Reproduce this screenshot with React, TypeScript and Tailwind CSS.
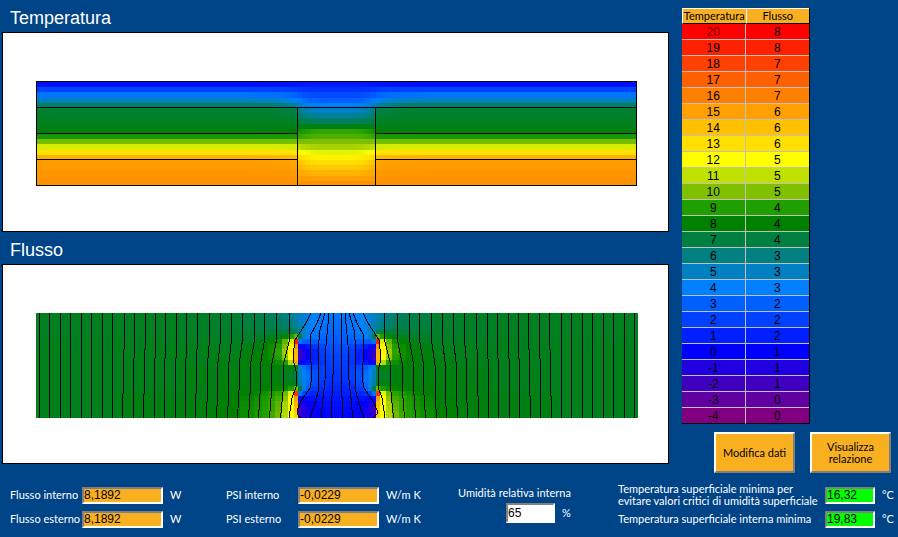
import React from "react";

const LEGEND = [
  { temp: 20, flux: 8, rgb: [255, 0, 0], bg: "bg-[#ff0000] text-[#780000]" },
  { temp: 19, flux: 8, rgb: [255, 32, 0], bg: "bg-[#ff2000]" },
  { temp: 18, flux: 7, rgb: [255, 64, 0], bg: "bg-[#ff4000]" },
  { temp: 17, flux: 7, rgb: [255, 96, 0], bg: "bg-[#ff6000]" },
  { temp: 16, flux: 7, rgb: [255, 128, 0], bg: "bg-[#ff8000]" },
  { temp: 15, flux: 6, rgb: [255, 160, 0], bg: "bg-[#ffa000]" },
  { temp: 14, flux: 6, rgb: [255, 192, 0], bg: "bg-[#ffc000]" },
  { temp: 13, flux: 6, rgb: [255, 224, 0], bg: "bg-[#ffe000]" },
  { temp: 12, flux: 5, rgb: [255, 255, 0], bg: "bg-[#ffff00]" },
  { temp: 11, flux: 5, rgb: [192, 224, 0], bg: "bg-[#c0e000]" },
  { temp: 10, flux: 5, rgb: [128, 192, 0], bg: "bg-[#80c000]" },
  { temp: 9, flux: 4, rgb: [32, 160, 0], bg: "bg-[#20a000]" },
  { temp: 8, flux: 4, rgb: [0, 128, 0], bg: "bg-[#008000]" },
  { temp: 7, flux: 4, rgb: [0, 128, 64], bg: "bg-[#008040]" },
  { temp: 6, flux: 3, rgb: [0, 128, 128], bg: "bg-[#008080]" },
  { temp: 5, flux: 3, rgb: [0, 128, 192], bg: "bg-[#0080c0]" },
  { temp: 4, flux: 3, rgb: [0, 128, 255], bg: "bg-[#0080ff]" },
  { temp: 3, flux: 2, rgb: [0, 96, 255], bg: "bg-[#0060ff]" },
  { temp: 2, flux: 2, rgb: [0, 64, 255], bg: "bg-[#0040ff]" },
  { temp: 1, flux: 2, rgb: [0, 32, 255], bg: "bg-[#0020ff]" },
  { temp: 0, flux: 1, rgb: [0, 0, 255], bg: "bg-[#0000ff]" },
  { temp: -1, flux: 1, rgb: [32, 0, 224], bg: "bg-[#2000e0]" },
  { temp: -2, flux: 1, rgb: [64, 0, 192], bg: "bg-[#4000c0]" },
  { temp: -3, flux: 0, rgb: [96, 0, 160], bg: "bg-[#6000a0]" },
  { temp: -4, flux: 0, rgb: [128, 0, 128], bg: "bg-[#800080]" },
];

// colour of a value on the -4..20 scale, blended between two legend steps
function colorAt(value: number) {
  const pos = Math.min(Math.max(20 - value, 0), 24);
  const i = Math.min(Math.floor(pos), 23);
  const f = pos - i;
  const a = LEGEND[i].rgb;
  const b = LEGEND[i + 1].rgb;
  const mix = a.map((c, k) => Math.round(c + (b[k] - c) * f));
  return `rgb(${mix.join(",")})`;
}

const ROWS = Array.from({ length: 20 }, (_, i) => i);
const rowY = (top: number, i: number) => Math.round(top + i * 5.2);

// temperature per row: far from the pillar, and on its axis
const WALL = [
  0.5, 2.1, 3.6, 5.1, 6.4, 7.2, 7.35, 7.5, 7.65, 7.8, 8.7, 9.9, 11.4, 13, 14.4,
  15.1, 15.2, 15.3, 15.4, 15.5,
];
const AXIS = [
  0.8, 1.5, 2.3, 3, 4.1, 4.9, 5.6, 6.5, 7.7, 9.2, 9.5, 10, 10.6, 11.6, 12.4, 13,
  13.7, 14.4, 15, 15.5,
];

function weight(d: number, row: number) {
  if (d < 39) return 1 - 0.5 * Math.pow(d / 39, 4);
  const near = row < 5 ? 0.5 : 0.15;
  return near * Math.exp(-(d - 39) / 14);
}

const TEMP_X = [33, 93, 153, 193, 213, 225, 237, 245, 253, 258, 262, 266, 270, 274, 278, 282, 286, 290, 294, 299, 303, 307, 311, 315, 319, 323, 327, 333.5];

// flux field, left half. Columns are the gaps between FLUX_X
const FLUX_X = [33, 117, 177, 212, 237, 251, 259, 265, 272, 279, 285, 291, 295, 299, 303, 307, 315, 323, 334];
const FLUX = [
  [7.5, 7.5, 7.4, 7.3, 7, 6.9, 6.8, 6.6, 6.4, 6.1, 5.7, 5.3, 5, 4.7, 4.4, 4.1, 3.8, 3.6],
  [7.5, 7.5, 7.4, 7.3, 7, 6.9, 6.8, 6.7, 6.5, 6.2, 5.8, 5.4, 5, 4.7, 4.4, 4.1, 3.7, 3.5],
  [7.5, 7.5, 7.4, 7.3, 7.1, 7, 6.9, 6.8, 6.7, 6.4, 6.1, 5.7, 5.2, 4.8, 4.4, 4, 3.6, 3.4],
  [7.5, 7.5, 7.4, 7.3, 7.2, 7.1, 7.1, 7.1, 7.1, 7, 7, 6.4, 5.6, 4.9, 4.3, 3.8, 3.5, 3.2],
  [7.5, 7.5, 7.5, 7.4, 7.3, 7.3, 7.4, 7.5, 7.7, 8.2, 8.9, 9.7, 7, 5, 4.2, 3.6, 3.3, 3],
  [7.6, 7.6, 7.5, 7.5, 7.5, 7.6, 7.8, 8.1, 8.5, 9.7, 11.4, 19.2, 3.5, 3, 2.9, 2.9, 2.9, 2.8],
  [7.6, 7.6, 7.6, 7.6, 7.7, 7.8, 8, 8.4, 9, 10, 12.2, 15.5, 0.2, 0.3, 0.8, 1.6, 2.2, 2.5],
  [7.6, 7.6, 7.6, 7.6, 7.8, 7.9, 8.1, 8.5, 9.1, 10.4, 12.4, 14.4, -1.6, -0.8, 0, 1, 1.9, 2.3],
  [7.6, 7.6, 7.6, 7.7, 7.8, 7.9, 8.1, 8.4, 9, 10.2, 12, 14.2, -2, -0.9, 0, 0.9, 1.7, 2.1],
  [7.6, 7.6, 7.6, 7.7, 7.8, 7.9, 8, 8.1, 8.4, 9, 10.8, 14.8, 0, 0.2, 0.6, 1.2, 1.6, 1.9],
  [7.6, 7.6, 7.7, 7.7, 7.8, 7.8, 7.9, 7.9, 7.8, 7.8, 7.8, 8.1, 4.8, 3.6, 2.8, 2.2, 1.9, 1.8],
  [7.6, 7.6, 7.7, 7.7, 7.8, 7.8, 7.8, 7.8, 7.8, 7.6, 7.4, 7, 5.1, 4.2, 3.4, 2.5, 2, 1.7],
  [7.6, 7.6, 7.7, 7.8, 7.8, 7.8, 7.8, 7.8, 7.8, 7.6, 7.4, 7, 5.2, 4.3, 3.6, 2.5, 1.9, 1.6],
  [7.6, 7.6, 7.7, 7.8, 7.9, 7.9, 7.9, 7.9, 7.9, 7.8, 7.8, 7.7, 5.4, 4.4, 3.4, 2.3, 1.7, 1.4],
  [7.6, 7.6, 7.7, 7.8, 7.9, 8, 8, 8.1, 8.2, 8.3, 8.8, 9.8, 7, 4.6, 3, 1.9, 1.4, 1.2],
  [7.6, 7.7, 7.7, 7.8, 8, 8.2, 8.5, 8.8, 9.1, 9.8, 11.6, 18.4, 3.6, 2.2, 1.5, 1.2, 1, 0.9],
  [7.6, 7.7, 7.7, 7.9, 8.2, 8.5, 8.8, 9.1, 9.4, 10.2, 12, 15, 0.2, 0.2, 0.3, 0.5, 0.6, 0.7],
  [7.6, 7.7, 7.8, 7.9, 8.3, 8.6, 8.9, 9.2, 9.6, 10.6, 12, 14.2, -1, -0.7, -0.2, 0, 0.3, 0.5],
  [7.6, 7.7, 7.8, 8, 8.4, 8.7, 9, 9.2, 9.7, 10.7, 12, 13.8, -2.2, -1.2, -0.6, -0.2, 0.1, 0.3],
  [7.6, 7.7, 7.8, 8, 8.4, 8.8, 9, 9.3, 9.8, 10.8, 12, 13.4, -1.4, -1, -0.6, -0.2, 0, 0.2],
];

// [x at the top, x at the bottom] of the flow lines through the wall
const WALL_LINES = [
  [36, 36], [46, 46], [57, 57], [67, 67], [78, 78], [88, 88], [99, 99],
  [109, 109], [121, 119], [131, 130], [142, 140], [152, 151], [162, 161],
  [173, 172], [183, 182], [194, 192], [206, 203], [217, 213], [228, 224],
  [239, 234], [251, 245], [261, 255], [273, 266], [286, 277],
];
// flow lines that bend into the pillar
const PILLAR_LINES = [
  "308,48 303,58 292,75 290,92 291,98 293,106 293,122 289,133 286,153",
  "318,48 314,58 307,71 308,98 309,112 307,123 298,136 294,145 294,149 298,153",
  "322,48 317,65 315,85 316,123 312,138 307,153",
  "326,48 323,80 322,115 318,153",
  "330,48 330,110 328,153",
];

function HalfLines() {
  return (
    <g fill="none" stroke="#000">
      {WALL_LINES.map(([a, b]) => {
        const c = a + (b - a) * 0.7;
        return (
          <polyline
            key={a}
            points={`${a + 0.5},48 ${a + 0.5},75 ${c + 0.5},100 ${c + 0.5},125 ${b + 0.5},153`}
          />
        );
      })}
      {PILLAR_LINES.map((points) => (
        <polyline key={points} points={points} />
      ))}
    </g>
  );
}

function TemperatureMap() {
  return (
    <svg viewBox="0 0 665 198" className="block w-full" shapeRendering="crispEdges" role="img" aria-label="Temperatura">
      {ROWS.map((r) =>
        TEMP_X.slice(0, -1).map((x, i) => {
          const w = TEMP_X[i + 1] - x;
          const d = 333.5 - (x + w / 2);
          const k = weight(d, r);
          const fill = colorAt(WALL[r] * (1 - k) + AXIS[r] * k);
          const y = rowY(49, r);
          const h = rowY(49, r + 1) - y;
          return (
            <g key={x} fill={fill}>
              <rect x={x} y={y} width={w} height={h} />
              <rect x={667 - x - w} y={y} width={w} height={h} />
            </g>
          );
        })
      )}
      <g fill="none" stroke="#000">
        <rect x="33.5" y="48.5" width="600" height="104" />
        <path d="M33 74.5H634M33 100.5H294M372 100.5H634M33 126.5H294M372 126.5H634M294.5 74V153M372.5 74V153" />
      </g>
    </svg>
  );
}

function FluxMap() {
  return (
    <svg viewBox="0 0 665 198" className="block w-full" shapeRendering="crispEdges" role="img" aria-label="Flusso">
      {FLUX.map((row, r) =>
        row.map((value, i) => {
          const x = FLUX_X[i];
          const w = FLUX_X[i + 1] - x;
          const y = rowY(48, r);
          const h = rowY(48, r + 1) - y + (r === 19 ? 1 : 0);
          return (
            <g key={x} fill={colorAt(value)}>
              <rect x={x} y={y} width={w} height={h} />
              <rect x={668 - x - w} y={y} width={w} height={h} />
            </g>
          );
        })
      )}
      <HalfLines />
      <g transform="matrix(-1 0 0 1 668 0)">
        <HalfLines />
      </g>
    </svg>
  );
}

function Panel({ title, children }: { title: string; children: React.ReactNode }) {
  return (
    <section>
      <h2 className="flex h-8 items-center pt-1 pl-2 text-[18px] leading-5">{title}</h2>
      <div className="border border-black bg-white">{children}</div>
    </section>
  );
}

const SUNKEN =
  "border-2 border-t-[#808080] border-l-[#808080] border-r-white border-b-white font-['Liberation_Sans',sans-serif] text-[12px] leading-3 text-black outline-none";

function Field({ id, label, value, unit }: { id: string; label: string; value: string; unit: string }) {
  return (
    <div className="flex h-6 items-center">
      <label htmlFor={id} className="w-[72px] whitespace-nowrap">{label}</label>
      <input id={id} readOnly defaultValue={value} className={`h-[17px] w-[81px] bg-[#f8b020] ${SUNKEN}`} />
      <span className="ml-[7px]">{unit}</span>
    </div>
  );
}

function Result({ id, label, value }: { id: string; label: React.ReactNode; value: string }) {
  return (
    <div className="flex h-6 items-center">
      <label htmlFor={id} className="w-[207px] leading-3 whitespace-nowrap">{label}</label>
      <input id={id} readOnly defaultValue={value} className={`h-[17px] w-[50px] bg-[#00ff00] ${SUNKEN}`} />
      <span className="ml-[7px]">°C</span>
    </div>
  );
}

const BUTTON =
  "h-[41px] w-[81px] border-2 border-t-white border-l-white border-r-[#808080] border-b-[#808080] bg-[#f8b020] leading-3 text-black";
const HEAD =
  "border-t border-l border-b border-t-white border-l-white border-b-black p-0 text-[11px] leading-[14px] font-normal whitespace-nowrap";
const CELL = "border-b border-b-[#c0c0c0] px-0 pt-px pb-0 font-['Liberation_Sans',sans-serif] leading-[14px]";

function App() {
  return (
    <main className="min-h-screen bg-[#004488] font-[Lato,'Liberation_Sans',sans-serif] text-[11px] leading-4 text-white">
      <div className="flex">
        <div className="min-w-0 flex-1 pl-[2px] font-['Liberation_Sans',sans-serif]">
          <Panel title="Temperatura">
            <TemperatureMap />
          </Panel>
          <Panel title="Flusso">
            <FluxMap />
          </Panel>
        </div>
        <aside className="w-[229px] shrink-0 pt-2 pr-[7px] pl-[13px]">
          <table className="w-32 table-fixed border-separate border-spacing-0 border-r border-black text-center text-[12px] text-black">
            <thead>
              <tr className="h-4 bg-[#f8b020]">
                <th className={HEAD}>Temperatura</th>
                <th className={HEAD}>Flusso</th>
              </tr>
            </thead>
            <tbody className="[&>tr:last-child>td]:border-b-black">
              {LEGEND.map((row) => (
                <tr key={row.temp} className={`h-4 ${row.bg}`}>
                  <td className={`border-r border-r-[#c0c0c0] ${CELL}`}>{row.temp}</td>
                  <td className={`text-black ${CELL}`}>{row.flux}</td>
                </tr>
              ))}
            </tbody>
          </table>
          <div className="mt-2 flex justify-end gap-[15px]">
            <button type="button" className={BUTTON}>Modifica dati</button>
            <button type="button" className={BUTTON}>Visualizza relazione</button>
          </div>
        </aside>
      </div>
      <form className="flex pt-[10px] pl-[10px]">
        <div className="w-[216px]">
          <Field id="flusso-interno" label="Flusso interno" value="8,1892" unit="W" />
          <Field id="flusso-esterno" label="Flusso esterno" value="8,1892" unit="W" />
        </div>
        <div className="w-[232px]">
          <Field id="psi-interno" label="PSI interno" value="-0,0229" unit="W/m K" />
          <Field id="psi-esterno" label="PSI esterno" value="-0,0229" unit="W/m K" />
        </div>
        <div className="w-[160px]">
          <label htmlFor="umidita" className="block leading-5 whitespace-nowrap">Umidità relativa interna</label>
          <div className="flex items-center pl-12">
            <input id="umidita" defaultValue="65" className={`h-5 w-[49px] bg-white ${SUNKEN}`} />
            <span className="ml-[7px]">%</span>
          </div>
        </div>
        <div>
          <Result
            id="temp-critica"
            label={<>Temperatura superficiale minima per<br />evitare valori critici di umidità superficiale</>}
            value="16,32"
          />
          <Result id="temp-minima" label="Temperatura superficiale interna minima" value="19,83" />
        </div>
      </form>
    </main>
  );
}

export default App;
